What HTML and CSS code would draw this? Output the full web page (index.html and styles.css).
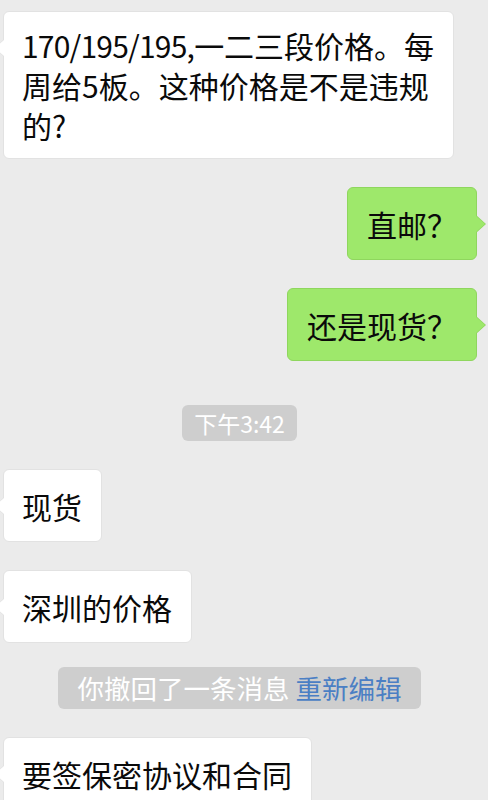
FILE: index.html
```html
<!DOCTYPE html>
<html lang="zh-CN">
<head>
<meta charset="utf-8">
<link rel="stylesheet" href="styles.css">
</head>
<body>
<div class="chat">
  <div class="row left">
    <div class="bubble white"><div><span class="nums">170/195/195,</span>一二三段价格。每<br>周给5板。这种价格是不是违规<br>的?</div></div>
  </div>
  <div class="row right">
    <div class="bubble green">直邮？</div>
  </div>
  <div class="row right">
    <div class="bubble green">还是现货？</div>
  </div>
  <div class="row center time-row">
    <div class="pill time">下午3:42</div>
  </div>
  <div class="row left">
    <div class="bubble white">现货</div>
  </div>
  <div class="row left">
    <div class="bubble white">深圳的价格</div>
  </div>
  <div class="row center recall-row">
    <div class="pill recall">你撤回了一条消息 <span class="link">重新编辑</span></div>
  </div>
  <div class="row left">
    <div class="bubble white">要签保密协议和合同</div>
  </div>
</div>
</body>
</html>
```

FILE: styles.css
```css
html, body {
  margin: 0;
  padding: 0;
  background: #ebebeb;
  overflow: hidden;
  height: 800px;
}

.chat {
  display: flex;
  flex-direction: column;
  gap: 28px;
  padding-top: 11px;
  font-family: "Noto Sans CJK SC", "Noto Sans", sans-serif;
  color: #0a0a0a;
}

.row {
  display: flex;
}

.row.left {
  justify-content: flex-start;
  padding-left: 3px;
}

.row.right {
  justify-content: flex-end;
  padding-right: 11px;
}

.row.center {
  justify-content: center;
  padding-right: 9px;
}

.time-row {
  margin-top: 16px;
}

.recall-row {
  margin-top: -4px;
}

.bubble {
  position: relative;
  box-sizing: border-box;
  min-height: 73px;
  display: flex;
  align-items: center;
  padding: 13px 19px 13px 18px;
  font-size: 30px;
  line-height: 40px;
  border-radius: 6px;
  white-space: nowrap;
}

.nums {
  letter-spacing: -0.8px;
}

.bubble.white {
  background: #ffffff;
  border: 1px solid #e2e2e2;
}

.bubble.green {
  background: #9ee86b;
  border: 1px solid #8fd65e;
  padding-left: 19px;
}

.bubble.white::before {
  content: "";
  position: absolute;
  left: -10px;
  top: 28px;
  border-top: 8px solid transparent;
  border-bottom: 8px solid transparent;
  border-right: 9px solid #e2e2e2;
}

.bubble.white::after {
  content: "";
  position: absolute;
  left: -9px;
  top: 28px;
  border-top: 8px solid transparent;
  border-bottom: 8px solid transparent;
  border-right: 9px solid #ffffff;
}

.bubble.green::before {
  content: "";
  position: absolute;
  right: -10px;
  top: 27px;
  border-top: 9px solid transparent;
  border-bottom: 9px solid transparent;
  border-left: 10px solid #8fd65e;
}

.bubble.green::after {
  content: "";
  position: absolute;
  right: -9px;
  top: 28px;
  border-top: 8px solid transparent;
  border-bottom: 8px solid transparent;
  border-left: 9px solid #9ee86b;
}

.pill {
  background: #cecece;
  color: #ffffff;
  border-radius: 6px;
  white-space: nowrap;
}

.pill.time {
  height: 36px;
  line-height: 36px;
  font-size: 23px;
  padding: 0 12px;
}

.pill.recall {
  height: 42px;
  line-height: 42px;
  font-size: 26.5px;
  padding: 0 20px;
}

.link {
  color: #4b7fc4;
}
```
